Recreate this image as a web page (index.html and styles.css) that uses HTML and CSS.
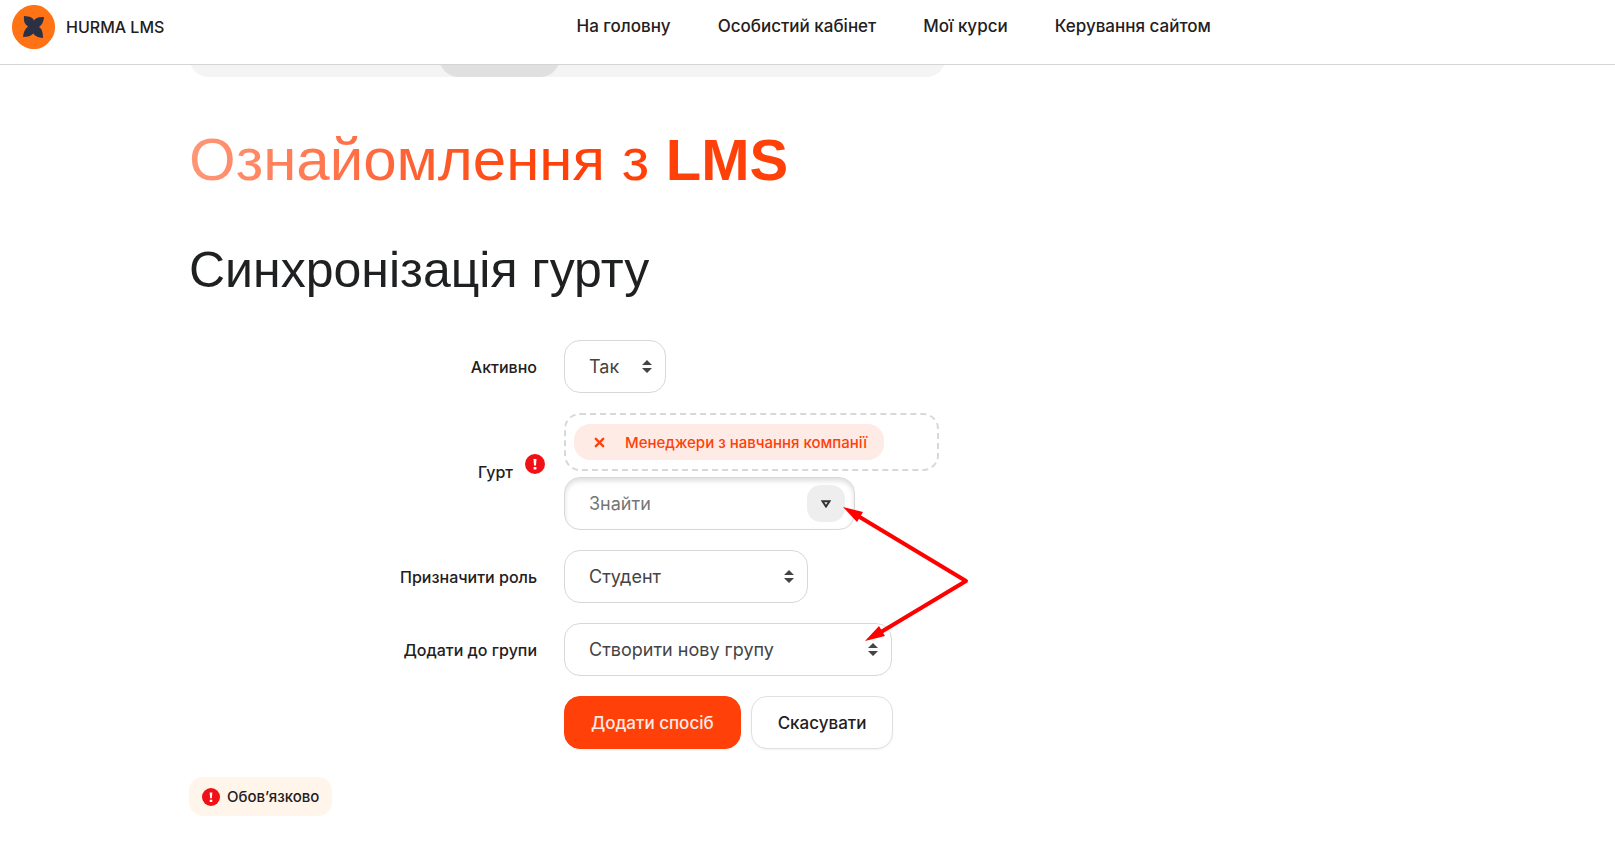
FILE: index.html
```html
<!DOCTYPE html>
<html lang="uk">
<head>
  <meta charset="UTF-8">
  <meta name="viewport" content="width=device-width, initial-scale=1.0">
  <title>HURMA LMS</title>
  <link rel="stylesheet" href="styles.css">
</head>
<body>

  <header class="navbar">
    <a class="brand" href="#">
      <svg class="brand-logo" viewBox="0 0 44 44" aria-hidden="true">
        <path fill="#ff7314" d="M22 0C28 0 32 2 36 6C41 11 43 16 43 22C43 28 41 33 36 38C32 42 28 44 22 44C16 44 12 42 7 38C2 33 0 28 0 22C0 16 2 11 7 6C12 2 16 0 22 0Z"/>
        <path fill="#2b3145" d="M12 11C18 11.500 21 12.500 22 15.500C24 12.500 27 12 32 12C31.500 17 30 20 27 22C30 24 31 27 31 33C27 32.500 23 31.500 21.500 28.500C19 31 16 32 11 32C11.500 27 13 24 16 21.500C12.500 19 11.500 16 12 11Z"/>
      </svg>
      <span class="brand-name">HURMA LMS</span>
    </a>
    <nav class="nav-links">
      <a href="#">На головну</a>
      <a href="#">Особистий кабінет</a>
      <a href="#">Мої курси</a>
      <a href="#">Керування сайтом</a>
    </nav>
  </header>

  <main class="page">
    <!-- Course tabs, scrolled under the navbar -->
    <div class="tabs"><div class="tab-active"></div></div>

    <h1><span class="course-title">Ознайомлення з <b>LMS</b></span></h1>
    <h2>Синхронізація гурту</h2>

    <form class="form">
      <label class="label" for="active">Активно</label>
      <div class="field">
        <div class="select select-sm">
          <select id="active"><option>Так</option></select>
          <svg class="caret" viewBox="0 0 10 13"><path d="M5 0L10 5H0ZM0 8H10L5 13Z"/></svg>
        </div>
      </div>

      <div class="label label-required">
        <label for="cohort">Гурт</label>
        <svg class="required" viewBox="0 0 20 20"><circle cx="10" cy="10" r="10"/><path d="M8.500 5H11.500L11 11.500H9ZM8.600 13H11.400V15.500H8.600Z"/></svg>
      </div>
      <div class="field">
        <div class="selection">
          <button class="chip" type="button">
            <svg class="chip-x" viewBox="0 0 10 10"><path d="M1 1L9 9M9 1L1 9"/></svg>
            Менеджери з навчання компанії
          </button>
        </div>
        <div class="search">
          <input id="cohort" type="text" placeholder="Знайти">
          <button class="search-toggle" type="button" aria-label="Показати список">
            <svg viewBox="0 0 10 8"><path d="M1.500 1.200H8.500L5 6.500Z"/></svg>
          </button>
        </div>
      </div>

      <label class="label" for="role">Призначити роль</label>
      <div class="field">
        <div class="select select-md">
          <select id="role"><option>Студент</option></select>
          <svg class="caret" viewBox="0 0 10 13"><path d="M5 0L10 5H0ZM0 8H10L5 13Z"/></svg>
        </div>
      </div>

      <label class="label" for="group">Додати до групи</label>
      <div class="field">
        <div class="select select-lg">
          <select id="group"><option>Створити нову групу</option></select>
          <svg class="caret" viewBox="0 0 10 13"><path d="M5 0L10 5H0ZM0 8H10L5 13Z"/></svg>
        </div>
      </div>

      <div class="actions">
        <button class="btn btn-primary" type="submit">Додати спосіб</button>
        <button class="btn" type="button">Скасувати</button>
      </div>

      <!-- Pointer arrows over the form -->
      <svg class="arrows" viewBox="0 0 126 136" aria-hidden="true">
        <path class="arrows-line" d="M15 9L123 74L38 125"/>
        <path class="arrows-head" d="M0 0L20 5L14 15ZM22 134L36 119L42 129Z"/>
      </svg>
    </form>

    <div class="note">
      <svg class="required" viewBox="0 0 20 20"><circle cx="10" cy="10" r="10"/><path d="M8.500 5H11.500L11 11.500H9ZM8.600 13H11.400V15.500H8.600Z"/></svg>
      Обов’язково
    </div>
  </main>

</body>
</html>
```
FILE: styles.css
```css
* { margin: 0; padding: 0; box-sizing: border-box; }

body {
  background: #fff;
  color: #1f2021;
  font-family: Inter, "Liberation Sans", sans-serif;
  font-size: 16px;
}

a { color: inherit; text-decoration: none; }
button, input, select { font: inherit; color: inherit; }

/* Navbar */
.navbar {
  position: sticky;
  top: 0;
  z-index: 10;
  display: flex;
  height: 65px;
  padding: 5px 0 0 12px;
  background: #fff;
  border-bottom: 1px solid #d5d5d5;
}

.brand {
  display: flex;
  align-items: center;
  gap: 10px;
  height: 44px;
  font-weight: 500;
}

.brand-logo { width: 44px; height: 44px; }

.nav-links {
  flex: 1;
  display: flex;
  justify-content: center;
  align-items: center;
  gap: 47px;
  height: 42px;
  padding-left: 8px;
  font-size: 17px;
  font-weight: 500;
}

/* Page */
.page {
  max-width: 1237px;
  margin: 0 auto;
}

.tabs {
  width: 757px;
  height: 52px;
  margin-top: -40px;
  padding-left: 250px;
  background: #f4f4f4;
  border-radius: 20px;
}

.tab-active {
  width: 121px;
  height: 52px;
  background: #e0e0e0;
  border-radius: 20px;
}

h1, h2 {
  font-family: "Liberation Sans", Arial, sans-serif;
  font-weight: 400;
}

h1 {
  margin-top: 47px;
  font-size: 60px;
  line-height: 72px;
}

h1 b { font-size: 58px; }

.course-title {
  background: linear-gradient(90deg, #ff9778, #ff4008 60%);
  -webkit-background-clip: text;
  background-clip: text;
  color: transparent;
}

h2 {
  margin-top: 44px;
  font-size: 50px;
  line-height: 60px;
}

/* Form */
.form {
  position: relative;
  display: grid;
  grid-template-columns: 348px 1fr;
  column-gap: 27px;
  row-gap: 20px;
  align-items: center;
  margin-top: 40px;
}

.label {
  justify-self: end;
  font-weight: 500;
}

.label-required {
  display: flex;
  align-items: center;
  gap: 12px;
  margin-right: -8px;
}

.required { width: 20px; height: 20px; fill: #f01015; }
.required path { fill: #fff; }
.label-required .required { margin-bottom: 16px; }

.select { position: relative; }
.select-sm { width: 102px; }
.select-md { width: 244px; }
.select-lg { width: 328px; }

select, .search {
  display: block;
  width: 100%;
  height: 53px;
  padding: 0 24px;
  border: 1px solid #d8d8d8;
  border-radius: 16px;
  background: #fff;
  color: #444;
  font-size: 18px;
  appearance: none;
}

.caret {
  position: absolute;
  top: 20px;
  right: 14px;
  width: 10px;
  height: 13px;
  fill: #444;
}

.selection {
  width: 375px;
  height: 58px;
  padding: 9px 8px;
  border: 2px dashed #d8d8d8;
  border-radius: 16px;
}

.chip {
  display: flex;
  align-items: center;
  gap: 20px;
  height: 36px;
  padding: 0 17px 0 20px;
  border: 0;
  border-radius: 16px;
  background: #ffebe6;
  color: #ff4008;
  font-size: 15px;
  font-weight: 500;
}

.chip-x {
  width: 11px;
  height: 11px;
  stroke: #ff4008;
  stroke-width: 2;
}

.search {
  display: flex;
  align-items: center;
  width: 291px;
  margin-top: 6px;
  padding-right: 9px;
  box-shadow: inset 0 3px 5px rgba(0, 0, 0, 0.13);
}

.search input {
  flex: 1;
  min-width: 0;
  border: 0;
  outline: 0;
  background: none;
}

.search input::placeholder { color: #757575; }

.search-toggle {
  display: flex;
  align-items: center;
  justify-content: center;
  width: 38px;
  height: 37px;
  border: 0;
  border-radius: 14px;
  background: #eee;
}

.search-toggle svg {
  width: 10px;
  height: 8px;
  fill: none;
  stroke: #333;
  stroke-width: 2;
}

.actions {
  grid-column: 2;
  display: flex;
  gap: 10px;
}

.btn {
  height: 53px;
  padding: 0 26px;
  border: 1px solid #e0e0e0;
  border-radius: 16px;
  background: #fff;
  box-shadow: 0 1px 2px rgba(0, 0, 0, 0.05);
  font-size: 17px;
  font-weight: 500;
}

.btn-primary {
  border-color: #ff4008;
  background: #ff4008;
  color: #ffece6;
}

.arrows {
  position: absolute;
  top: 167px;
  left: 654px;
  width: 126px;
  height: 136px;
  pointer-events: none;
}

.arrows-line {
  fill: none;
  stroke: #f00;
  stroke-width: 4;
  stroke-linejoin: round;
}

.arrows-head { fill: #f00; }

.note {
  display: inline-flex;
  align-items: center;
  gap: 7px;
  height: 39px;
  margin-top: 28px;
  padding: 0 13px;
  border-radius: 14px;
  background: #fff5ea;
  font-size: 15px;
  font-weight: 500;
}

.note .required { width: 18px; height: 18px; }
```
